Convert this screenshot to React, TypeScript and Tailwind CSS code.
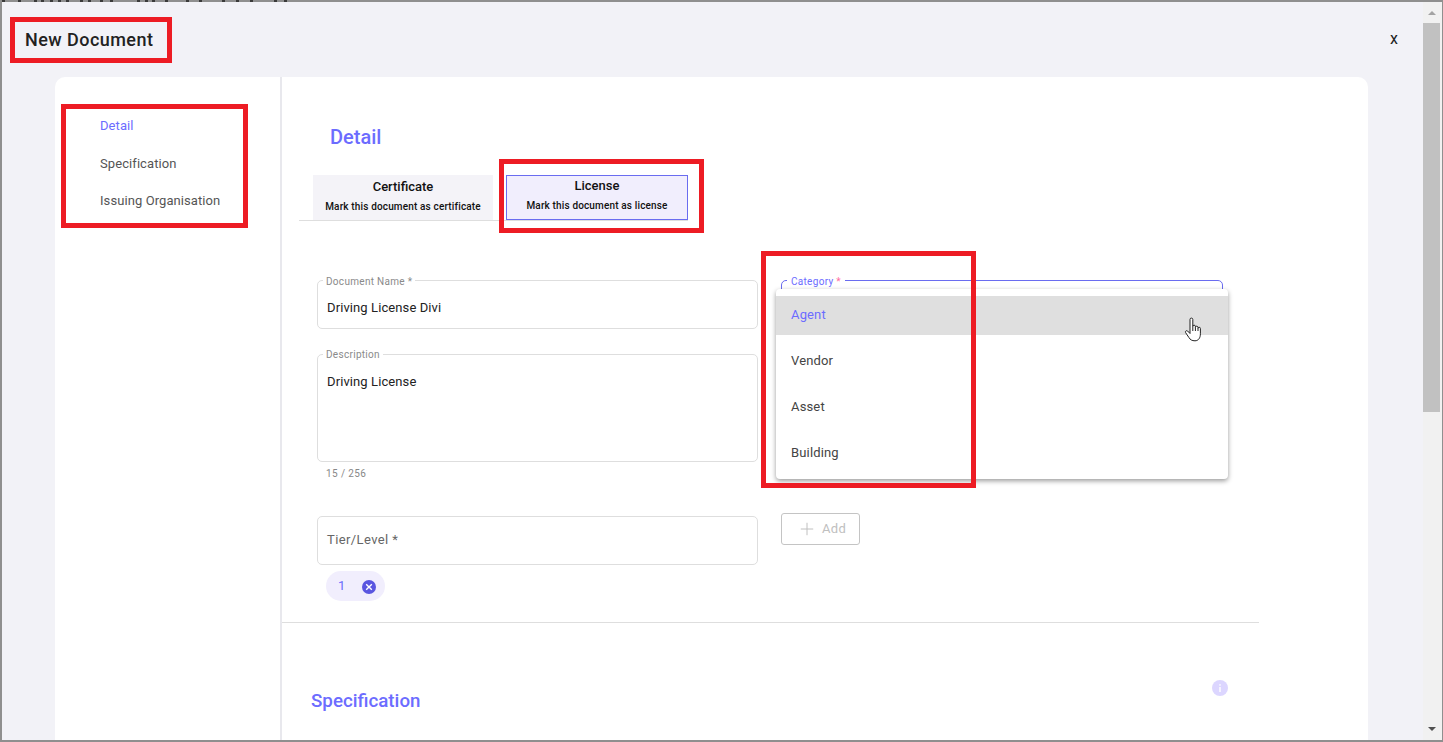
import { Plus } from "lucide-react";

const sideItems = ["Detail", "Specification", "Issuing Organisation"];
// bits of the page behind the dialog that show through the top edge
const topSpecks = [2, 18, 34, 41, 50, 58, 66, 80, 88, 100, 110, 137, 145, 152, 165, 186, 199, 222, 236, 250, 274, 284];

function Field({ label, value, height, labelTop }: { label: string; value: string; height: string; labelTop: string }) {
  return (
    <div className={`relative rounded-[5px] border border-[#dedede] px-[9px] pt-[18px] ${height}`}>
      <span className={`absolute left-[5px] bg-white px-[3px] text-[10px] leading-[12px] tracking-[0.3px] text-[#8a8a8a] ${labelTop}`}>
        {label}
      </span>
      <p className="text-[13px] leading-[18px] tracking-[0.1px] text-[#222]">{value}</p>
    </div>
  );
}

function HandCursor() {
  return (
    <svg viewBox="0 0 18 25" className="absolute top-[21px] right-[26px] h-[25px] w-[18px]" fill="#fff" stroke="#222" strokeWidth="1">
      <path d="M6 16.5L3.6 14C2.6 13 .8 14.3 1.6 15.6L4.8 20.4C6.2 22.8 8 23.8 11 23.8C14.5 23.8 16.4 20.8 16.4 16.8V11.5A1.2 1.2 0 0 0 14 11.5V10.5A1.3 1.3 0 0 0 11.4 10.5V9.5A1.3 1.3 0 0 0 8.8 9.5V2.5A1.4 1.4 0 0 0 6 2.5Z" />
      <path d="M8.8 9.5V14M11.4 10.5V14M14 11.5V14" fill="none" />
    </svg>
  );
}

function CategoryMenu() {
  return (
    <div className="absolute top-[8px] left-[-6px] z-10 h-[190px] w-[452px] rounded-[4px] bg-white pt-[7px] text-[13px] tracking-[0.15px] text-[#444] shadow-[0_2px_5px_rgba(0,0,0,0.4)]">
      <div className="relative flex h-[39px] items-center bg-[#dfdfdf] pb-[2px] pl-[15px] text-[#6c6cff]">
        Agent
        <HandCursor />
      </div>
      <div className="flex h-[49px] items-center pt-[2px] pl-[15px]">Vendor</div>
      <div className="flex h-[46px] items-center pl-[15px]">Asset</div>
      <div className="flex h-[46px] items-center pl-[15px]">Building</div>
    </div>
  );
}

function Scrollbar() {
  return (
    <div className="flex w-[19px] shrink-0 flex-col bg-[#f1f1f1]">
      <div className="flex h-[21px] w-[17px] items-center justify-center">
        <div className="h-0 w-0 border-x-[4px] border-b-[4px] border-x-transparent border-b-[#a3a3a3]" />
      </div>
      <div className="h-[389px] w-[17px] bg-[#c1c1c1]" />
      <div className="mt-auto mb-[3px] flex h-[17px] w-[17px] items-center justify-center">
        <div className="h-0 w-0 border-x-[4px] border-t-[4px] border-x-transparent border-t-[#505050]" />
      </div>
    </div>
  );
}

export default function App() {
  return (
    <div
      className="relative h-[742px] w-[1443px] overflow-hidden bg-[#8f8f8f] pt-[2px] pr-[1px] pb-[2px] pl-[2px]"
      style={{ fontFamily: "Roboto, sans-serif" }}
    >
      <svg className="absolute top-0 left-0 h-[2px] w-[300px]" viewBox="0 0 300 2">
        {topSpecks.map((x) => (
          <rect key={x} x={x} y="0" width="3" height="2" fill="#3a3a3a" />
        ))}
      </svg>

      <div className="flex h-full bg-[#f2f2f7]">
        <div className="flex min-w-0 flex-1 flex-col">
          <header className="flex h-[75px] shrink-0 items-center justify-between pr-[25px] pl-[23px]">
            <h1 className="text-[18px] font-medium tracking-[0.45px] text-[#222]">New Document</h1>
            <button className="pb-[2px] text-[16px] text-[#222]">x</button>
          </header>

          <div className="ml-[53px] flex min-h-0 w-[1313px] flex-1 overflow-hidden rounded-t-[10px] bg-white">
            <nav className="flex w-[225px] shrink-0 flex-col pt-[40px] pl-[45px] text-[13px] leading-[18px] tracking-[0.08px] text-[#555]">
              <a className="text-[#6c6cff]">{sideItems[0]}</a>
              <a className="mt-[20px]">{sideItems[1]}</a>
              <a className="mt-[19px]">{sideItems[2]}</a>
            </nav>

            <main className="w-[979px] shrink-0 border-l-2 border-[#e8e8ed]">
              <h2 className="pt-[48px] pl-[48px] text-[20px] leading-[24px] font-medium text-[#6c6cff]">Detail</h2>

              <div className="mt-[26px] ml-[17px] flex h-[46px] w-[389px] gap-[13px] border-b border-[#dedede] pl-[14px] text-center text-[#111]">
                <button className="flex h-[45px] w-[180px] flex-col items-center bg-[#f4f3f8] pt-[4px]">
                  <span className="block text-[13px] leading-[15px] font-medium">Certificate</span>
                  <span className="mt-[7px] block text-[10px] leading-[12px] font-medium tracking-[0.15px]">Mark this document as certificate</span>
                </button>
                <button className="flex h-[45px] w-[182px] flex-col items-center border border-[#6a6cf0] bg-[#f1eefd] pt-[2px]">
                  <span className="block text-[13px] leading-[15px] font-medium">License</span>
                  <span className="mt-[7px] block text-[10px] leading-[12px] font-medium tracking-[0.15px]">Mark this document as license</span>
                </button>
              </div>

              <div className="mt-[59px] flex gap-[23px] pl-[35px]">
                <div className="w-[441px]">
                  <Field label="Document Name *" value="Driving License Divi" height="h-[49px]" labelTop="top-[-5px]" />
                  <div className="mt-[25px]">
                    <Field label="Description" value="Driving License" height="h-[108px]" labelTop="top-[-6px]" />
                  </div>
                  <p className="mt-[6px] pl-[9px] text-[10px] leading-[12px] tracking-[0.4px] text-[#888]">15 / 256</p>
                  <div className="mt-[36px] flex h-[49px] items-center rounded-[5px] border border-[#dedede] pb-[2px] pl-[9px] text-[13px] tracking-[0.4px] text-[#666]">
                    Tier/Level *
                  </div>
                  <div className="mt-[6px] ml-[9px] flex h-[30px] w-[59px] items-center rounded-full bg-[#f1eefd] pl-[12px] text-[13px] text-[#6c6cff]">
                    <span className="-mt-[1px]">1</span>
                    <span className="mt-[1px] ml-[17px] flex h-[14px] w-[14px] items-center justify-center rounded-full bg-[#5a56e0]">
                      <svg viewBox="0 0 8 8" className="h-[8px] w-[8px]" stroke="#fff" strokeWidth="1.4">
                        <path d="M1.2 1.2L6.8 6.8M6.8 1.2L1.2 6.8" />
                      </svg>
                    </span>
                  </div>
                </div>

                <div className="w-[442px]">
                  <div className="relative h-[49px] rounded-[5px] border border-[#6a6cf0]">
                    <span className="absolute top-[-5px] left-[5px] bg-white px-[4px] text-[10px] leading-[12px] tracking-[0.3px] text-[#6c6cff]">
                      Category <span className="text-[#ff6fa0]">*</span>
                    </span>
                    <CategoryMenu />
                  </div>
                  <button className="mt-[184px] flex h-[32px] w-[79px] items-center rounded-[3px] border border-[#c4c4c4] pl-[15px] text-[13px] tracking-[0.3px] text-[#c0c0c0]">
                    <Plus className="mr-[5px] h-[20px] w-[20px]" strokeWidth={1.2} />
                    Add
                  </button>
                </div>
              </div>

              <div className="mt-[21px] border-t border-[#dedede] pt-[57px] pr-[31px] pl-[29px]">
                <div className="flex items-start justify-between">
                  <h2 className="mt-[9px] text-[18.75px] leading-[24px] font-medium text-[#6c6cff]">Specification</h2>
                  <span className="flex h-[16px] w-[16px] items-center justify-center rounded-full bg-[#dcd6ff]">
                    <svg viewBox="0 0 16 16" className="h-[16px] w-[16px]" fill="#fff">
                      <rect x="7.3" y="7" width="1.4" height="5" />
                      <rect x="7.3" y="4.2" width="1.4" height="1.5" />
                    </svg>
                  </span>
                </div>
              </div>
            </main>
          </div>
        </div>
        <Scrollbar />
      </div>

      {/* red annotation boxes drawn over the screenshot */}
      <div className="absolute top-[17px] left-[10px] h-[46px] w-[162px] border-[5px] border-[#ed1c24]" />
      <div className="absolute top-[104px] left-[61px] h-[124px] w-[187px] border-[5px] border-[#ed1c24]" />
      <div className="absolute top-[159px] left-[499px] h-[74px] w-[205px] border-[5px] border-[#ed1c24]" />
      <div className="absolute top-[251px] left-[761px] z-20 h-[237px] w-[215px] border-[5px] border-[#ed1c24]" />
    </div>
  );
}
